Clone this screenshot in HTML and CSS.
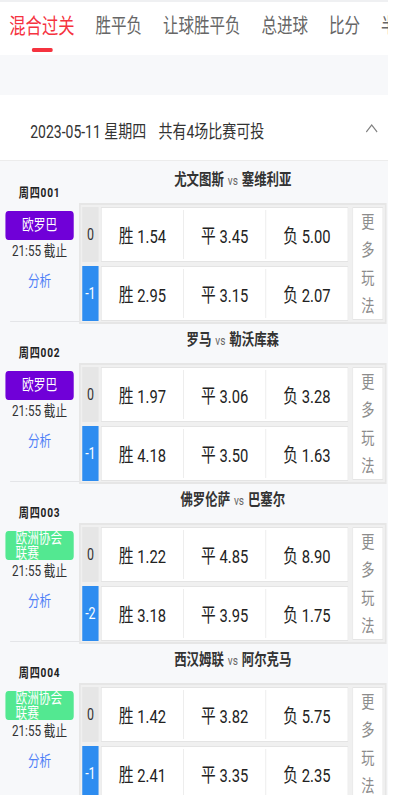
FILE: index.html
```html
<!DOCTYPE html>
<html lang="zh-CN">
<head>
  <meta charset="UTF-8">
  <meta name="viewport" content="width=device-width, initial-scale=1.0">
  <title>混合过关</title>
  <link rel="stylesheet" href="styles.css">
</head>
<body>
  <div class="page">
    <div class="tabs">
      <div class="tab active">混合过关</div>
      <div class="tab">胜平负</div>
      <div class="tab">让球胜平负</div>
      <div class="tab">总进球</div>
      <div class="tab">比分</div>
      <div class="tab">半全场</div>
    </div>

    <div class="date-bar">
      <span class="date">2023-05-11 星期四</span>
      <span class="count">共有4场比赛可投</span>
      <svg class="fold" viewBox="0 0 16 10"><polyline points="1,9 8,2 15,9" /></svg>
    </div>

    <div class="matches">
      <div class="match">
        <div class="side">
          <div class="week">周四001</div>
          <div class="league uel"><span>欧罗巴</span></div>
          <div class="deadline">21:55 截止</div>
          <div class="analysis">分析</div>
          <div class="side-line"></div>
        </div>
        <div class="main">
          <div class="teams">尤文图斯<span class="vs">vs</span>塞维利亚</div>
          <div class="odds">
            <div class="odds-rows">
              <div class="odds-row">
                <div class="hcap">0</div>
                <div class="cells"><div class="cell">胜 1.54</div><div class="cell">平 3.45</div><div class="cell">负 5.00</div></div>
              </div>
              <div class="odds-row">
                <div class="hcap minus">-1</div>
                <div class="cells"><div class="cell">胜 2.95</div><div class="cell">平 3.15</div><div class="cell">负 2.07</div></div>
              </div>
            </div>
            <div class="more">更多玩法</div>
          </div>
        </div>
      </div>

      <div class="match">
        <div class="side">
          <div class="week">周四002</div>
          <div class="league uel"><span>欧罗巴</span></div>
          <div class="deadline">21:55 截止</div>
          <div class="analysis">分析</div>
          <div class="side-line"></div>
        </div>
        <div class="main">
          <div class="teams">罗马<span class="vs">vs</span>勒沃库森</div>
          <div class="odds">
            <div class="odds-rows">
              <div class="odds-row">
                <div class="hcap">0</div>
                <div class="cells"><div class="cell">胜 1.97</div><div class="cell">平 3.06</div><div class="cell">负 3.28</div></div>
              </div>
              <div class="odds-row">
                <div class="hcap minus">-1</div>
                <div class="cells"><div class="cell">胜 4.18</div><div class="cell">平 3.50</div><div class="cell">负 1.63</div></div>
              </div>
            </div>
            <div class="more">更多玩法</div>
          </div>
        </div>
      </div>

      <div class="match">
        <div class="side">
          <div class="week">周四003</div>
          <div class="league uecl"><span>欧洲协会联赛</span></div>
          <div class="deadline">21:55 截止</div>
          <div class="analysis">分析</div>
          <div class="side-line"></div>
        </div>
        <div class="main">
          <div class="teams">佛罗伦萨<span class="vs">vs</span>巴塞尔</div>
          <div class="odds">
            <div class="odds-rows">
              <div class="odds-row">
                <div class="hcap">0</div>
                <div class="cells"><div class="cell">胜 1.22</div><div class="cell">平 4.85</div><div class="cell">负 8.90</div></div>
              </div>
              <div class="odds-row">
                <div class="hcap minus">-2</div>
                <div class="cells"><div class="cell">胜 3.18</div><div class="cell">平 3.95</div><div class="cell">负 1.75</div></div>
              </div>
            </div>
            <div class="more">更多玩法</div>
          </div>
        </div>
      </div>

      <div class="match">
        <div class="side">
          <div class="week">周四004</div>
          <div class="league uecl"><span>欧洲协会联赛</span></div>
          <div class="deadline">21:55 截止</div>
          <div class="analysis">分析</div>
          <div class="side-line"></div>
        </div>
        <div class="main">
          <div class="teams">西汉姆联<span class="vs">vs</span>阿尔克马</div>
          <div class="odds">
            <div class="odds-rows">
              <div class="odds-row">
                <div class="hcap">0</div>
                <div class="cells"><div class="cell">胜 1.42</div><div class="cell">平 3.82</div><div class="cell">负 5.75</div></div>
              </div>
              <div class="odds-row">
                <div class="hcap minus">-1</div>
                <div class="cells"><div class="cell">胜 2.41</div><div class="cell">平 3.35</div><div class="cell">负 2.35</div></div>
              </div>
            </div>
            <div class="more">更多玩法</div>
          </div>
        </div>
      </div>
    </div>
  </div>
</body>
</html>
```

FILE: styles.css
```css
html,
body {
  margin: 0;
  padding: 0;
  background-color: #FFFFFF;
  overflow: hidden;
}

/* the page is laid out 500px wide and narrowed to 388px on screen */
.page {
  width: 500px;
  height: 795px;
  overflow: hidden;
  background-color: #F7F8FA;
  font-family: Roboto, "Noto Sans CJK SC", sans-serif;
  color: #333333;
  transform: scaleX(0.776);
  transform-origin: 0 0;
}

.tabs {
  display: flex;
  gap: 27px;
  height: 43px;
  padding: 10px 0 0 12px;
  border-top: 2px solid #EFF0F2;
  background-color: #FFFFFF;
  white-space: nowrap;
  overflow: hidden;
}

.tab {
  flex: none;
  display: flex;
  flex-direction: column;
  align-items: center;
  font-size: 20px;
  line-height: 28px;
  color: #666666;
}

.tab.active {
  font-size: 21px;
  color: #F5333F;
}

.tab.active::after {
  content: "";
  width: 27px;
  height: 4px;
  margin-top: 8px;
  border-radius: 2px;
  background-color: #F5333F;
}

.date-bar {
  display: flex;
  align-items: center;
  height: 61px;
  margin-top: 40px;
  padding: 4px 13px 0 39px;
  background-color: #FFFFFF;
  border-bottom: 1px solid #ECECEC;
  font-size: 18px;
  color: #333333;
}

.count {
  margin-left: 16px;
}

.fold {
  width: 16px;
  height: 10px;
  margin: -4px 0 0 auto;
  fill: none;
  stroke: #808080;
  stroke-width: 1.4;
}

.matches {
  padding-top: 3px;
}

.match {
  display: flex;
  height: 160px;
}

.side {
  flex: none;
  width: 102px;
  height: 158px;
  display: flex;
  flex-direction: column;
  align-items: center;
}

.week {
  margin-top: 19px;
  font-size: 13px;
  line-height: 20px;
  font-weight: 700;
  letter-spacing: 1px;
  color: #222222;
}

.league {
  display: flex;
  align-items: center;
  justify-content: center;
  box-sizing: border-box;
  width: 88px;
  height: 29px;
  margin-top: 8px;
  padding: 0 13px;
  border-radius: 4px;
  font-size: 15px;
  line-height: 15px;
  color: #FFFFFF;
}

.uel {
  background-color: #7000D8;
}

.uecl {
  background-color: #53E891;
}

.deadline {
  margin-top: 1px;
  font-size: 15px;
  line-height: 20px;
}

.analysis {
  margin-top: 10px;
  font-size: 15px;
  line-height: 20px;
  color: #4F7FF7;
}

.side-line {
  align-self: stretch;
  height: 1px;
  margin: auto 0 0 13px;
  background-color: #E4E5E8;
}

.main {
  flex: 1;
  min-width: 0;
  margin-right: 2px;
}

.teams {
  height: 33px;
  padding-top: 6px;
  line-height: 20px;
  text-align: center;
  font-size: 16px;
  font-weight: 700;
  color: #333333;
}

.vs {
  margin: 0 5px;
  font-size: 13px;
  font-weight: 400;
  color: #666666;
}

.odds {
  display: flex;
  gap: 5px;
  padding: 2px 2px 1px;
  border: 2px solid #E6E6E6;
  background-color: #F0F0F0;
}

.odds-rows {
  flex: 1;
  display: flex;
  flex-direction: column;
  gap: 4px;
}

.odds-row {
  display: flex;
  gap: 3px;
  height: 55px;
}

.hcap {
  flex: none;
  width: 21px;
  display: flex;
  align-items: center;
  justify-content: center;
  background-color: #E6E6E6;
  font-size: 16px;
  color: #333333;
}

.hcap.minus {
  background-color: #2D8CF0;
  color: #FFFFFF;
}

.cells {
  flex: 1;
  display: flex;
  background-color: #FFFFFF;
  border: 1px solid #E4E4E4;
}

.cell {
  flex: 1;
  display: flex;
  align-items: center;
  justify-content: center;
  margin: 2px 0;
  font-size: 19px;
  color: #222222;
}

.cell + .cell {
  border-left: 1px solid #E8E8E8;
}

.more {
  flex: none;
  box-sizing: border-box;
  width: 40px;
  height: 113px;
  padding: 0 10px;
  overflow: hidden;
  background-color: #FFFFFF;
  border: 1px solid #E4E4E4;
  text-align: center;
  font-size: 17px;
  line-height: 28px;
  color: #8C8C8C;
}
```
